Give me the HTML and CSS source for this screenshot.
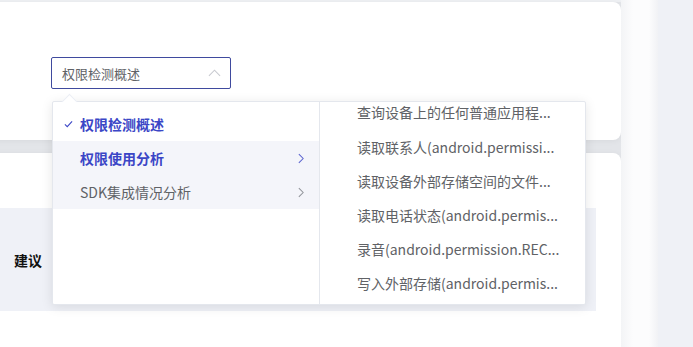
FILE: index.html
```html
<!DOCTYPE html>
<html lang="zh-CN">
<head>
    <meta charset="UTF-8"/>
    <title>权限检测</title>
    <link rel="stylesheet" href="styles.css">
</head>
<body>

<div class="main">
    <!-- filter card -->
    <div class="card card-top">
        <div class="select-wrap">
            <div class="select">
                <span class="select-text">权限检测概述</span>
                <svg class="select-arrow" viewBox="0 0 14 8" aria-hidden="true">
                    <polyline points="1,7 7,1 13,7"/>
                </svg>
            </div>

            <!-- cascader dropdown -->
            <div class="cascader">
                <span class="cascader-arrow"></span>
                <div class="menu">
                    <ul class="menu-list">
                        <li class="node active">
                            <svg class="node-check" viewBox="0 0 10 8" aria-hidden="true">
                                <polyline points="1,4.5 3.6,7 9,1"/>
                            </svg>
                            权限检测概述
                        </li>
                        <li class="node in-path hover">
                            权限使用分析
                            <svg class="node-next" viewBox="0 0 7 12" aria-hidden="true">
                                <polyline points="1,1 6,6 1,11"/>
                            </svg>
                        </li>
                        <li class="node hover">
                            SDK集成情况分析
                            <svg class="node-next" viewBox="0 0 7 12" aria-hidden="true">
                                <polyline points="1,1 6,6 1,11"/>
                            </svg>
                        </li>
                    </ul>
                </div>
                <div class="menu menu-sub">
                    <ul class="menu-list scrolled">
                        <li class="node sub first">查询设备上的任何普通应用程...</li>
                        <li class="node sub">读取联系人(android.permissi...</li>
                        <li class="node sub">读取设备外部存储空间的文件...</li>
                        <li class="node sub">读取电话状态(android.permis...</li>
                        <li class="node sub">录音(android.permission.REC...</li>
                        <li class="node sub">写入外部存储(android.permis...</li>
                    </ul>
                </div>
            </div>
        </div>
    </div>

    <!-- table card -->
    <div class="card card-table">
        <div class="table-head">
            <span class="th">建议</span>
        </div>
    </div>
</div>

<div class="gutter"></div>
<div class="side-panel"></div>

</body>
</html>
```

FILE: styles.css
```css
body {
  margin: 0;
  height: 347px;
  overflow: hidden;
  display: flex;
  background: #fafbfc;
  font-family: "Noto Sans CJK SC", "Noto Sans", sans-serif;
  color: #606266;
}
ul {
  margin: 0;
  padding: 0;
  list-style: none;
}

.main {
  width: 621px;
  flex: none;
  display: flex;
  flex-direction: column;
  gap: 13px;
  padding-top: 2px;
  background: linear-gradient(to bottom, #eef0f3 0, #eef0f3 2px, #e3e5e9 2px);
}
.gutter {
  width: 37px;
  flex: none;
  background: linear-gradient(to right, #f3f4f6, #fcfcfd 12px, #fcfcfd 28px, #f1f2f5);
}
.side-panel {
  flex: 1;
  background: #eff1f6;
}

.card {
  background: #fff;
  margin-left: -10px;
  border-radius: 8px;
  box-shadow: 0 1px 6px rgba(0, 0, 0, 0.05);
}
.card-top {
  height: 138px;
  padding: 55px 0 0 61px;
  box-sizing: border-box;
}
.card-table {
  flex: 1;
  padding: 55px 25px 0 10px;
  border-radius: 8px 8px 0 0;
}

/* select */
.select-wrap {
  position: relative;
  width: 180px;
}
.select {
  height: 32px;
  box-sizing: border-box;
  border: 1px solid #3f4a9e;
  border-radius: 2px;
  display: flex;
  align-items: center;
  padding: 0 9px 0 10px;
  font-size: 13px;
}
.select-text {
  flex: 1;
  color: #606266;
}
.select-arrow {
  width: 13px;
  height: 8px;
  fill: none;
  stroke: #c8cad0;
  stroke-width: 1.2;
}

/* cascader dropdown */
.cascader {
  position: absolute;
  top: 44px;
  left: 1px;
  z-index: 10;
  display: flex;
  height: 204px;
  background: #fff;
  border: 1px solid #e4e7ed;
  box-sizing: border-box;
  border-radius: 2px;
  box-shadow: 0 2px 12px rgba(0, 0, 0, 0.1);
}
.cascader-arrow {
  position: absolute;
  top: -6px;
  left: 11px;
  width: 10px;
  height: 10px;
  background: #fff;
  border-top: 1px solid #ebeef5;
  border-left: 1px solid #ebeef5;
  transform: rotate(45deg);
}
.menu {
  width: 266px;
  overflow: hidden;
  border-right: 1px solid #e4e7ed;
}
.menu-sub {
  width: 265px;
  border-right: none;
}
.menu-list {
  padding: 5px 0 6px;
}
/* sub list is scrolled to the bottom, first row only partly shown */
.menu-list.scrolled {
  padding-top: 0;
}
.node {
  position: relative;
  height: 34px;
  line-height: 34px;
  font-size: 14px;
  padding: 0 30px 0 27px;
  display: flex;
  align-items: center;
  color: #606266;
}
.node.hover {
  background: #f4f5fa;
}
.node.active,
.node.in-path {
  color: #3b46c6;
  font-weight: 700;
}
.node-check {
  position: absolute;
  left: 11px;
  top: 13px;
  width: 9px;
  height: 8px;
  fill: none;
  stroke: #3b46c6;
  stroke-width: 1.2;
}
.node-next {
  position: absolute;
  right: 15px;
  top: 12px;
  width: 6px;
  height: 11px;
  fill: none;
  stroke: #909399;
  stroke-width: 1.2;
}
.node.in-path .node-next {
  stroke: #5a63cf;
}
.node.sub {
  display: block;
  padding: 0 10px 0 37px;
  white-space: nowrap;
}
.node.sub.first {
  height: 28px;
  line-height: 21px;
}

/* table */
.table-head {
  height: 103px;
  background: #eff1f7;
  display: flex;
  align-items: center;
  padding-left: 14px;
}
.th {
  font-size: 14px;
  font-weight: 700;
  color: #111;
}
```
